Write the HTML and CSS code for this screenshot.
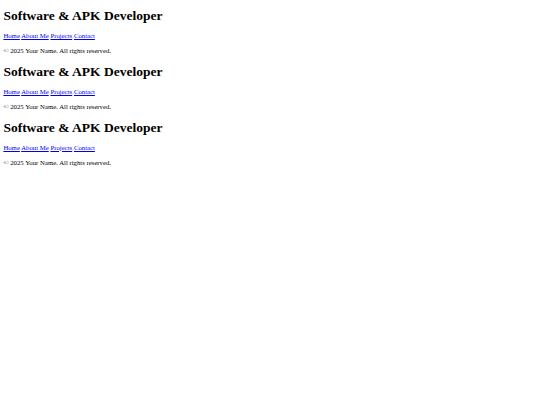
FILE: index.html
```html
<!DOCTYPE html>
<html lang="en">
<head>
<meta charset="utf-8">
<title>Software &amp; APK Developer</title>
<link rel="stylesheet" href="styles.css">
</head>
<body class="page">
  <section class="block">
    <header class="site-header">
      <h1 class="title">Software &amp; APK Developer</h1>
      <nav class="nav"><a href="#" class="nav-link">Home</a> <a href="#" class="nav-link">About Me</a> <a href="#" class="nav-link">Projects</a> <a href="#" class="nav-link">Contact</a></nav>
    </header>
    <footer class="site-footer"><p class="copy">&copy; 2025 Your Name. All rights reserved.</p></footer>
  </section>
  <section class="block">
    <header class="site-header">
      <h1 class="title">Software &amp; APK Developer</h1>
      <nav class="nav"><a href="#" class="nav-link">Home</a> <a href="#" class="nav-link">About Me</a> <a href="#" class="nav-link">Projects</a> <a href="#" class="nav-link">Contact</a></nav>
    </header>
    <footer class="site-footer"><p class="copy">&copy; 2025 Your Name. All rights reserved.</p></footer>
  </section>
  <section class="block">
    <header class="site-header">
      <h1 class="title">Software &amp; APK Developer</h1>
      <nav class="nav"><a href="#" class="nav-link">Home</a> <a href="#" class="nav-link">About Me</a> <a href="#" class="nav-link">Projects</a> <a href="#" class="nav-link">Contact</a></nav>
    </header>
    <footer class="site-footer"><p class="copy">&copy; 2025 Your Name. All rights reserved.</p></footer>
  </section>
</body>
</html>
```
FILE: styles.css
```css
html { background: #ffffff; }
.page {
  margin: 0;
  padding: 0 3.375px;
  font-family: "Liberation Serif", "Times New Roman", serif;
  font-size: 6.75px;
  line-height: 7.76px;
  color: #000000;
}
.title {
  font-size: 13.5px;
  line-height: 15.5px;
  font-weight: bold;
  margin: 9.045px 0 8.6px;
}
.block:first-child .title {
  margin-top: 8px;
}
.nav-link {
  color: #0000ee;
  text-decoration: underline;
}
.copy {
  margin: 7.2px 0 6.75px;
}
```
